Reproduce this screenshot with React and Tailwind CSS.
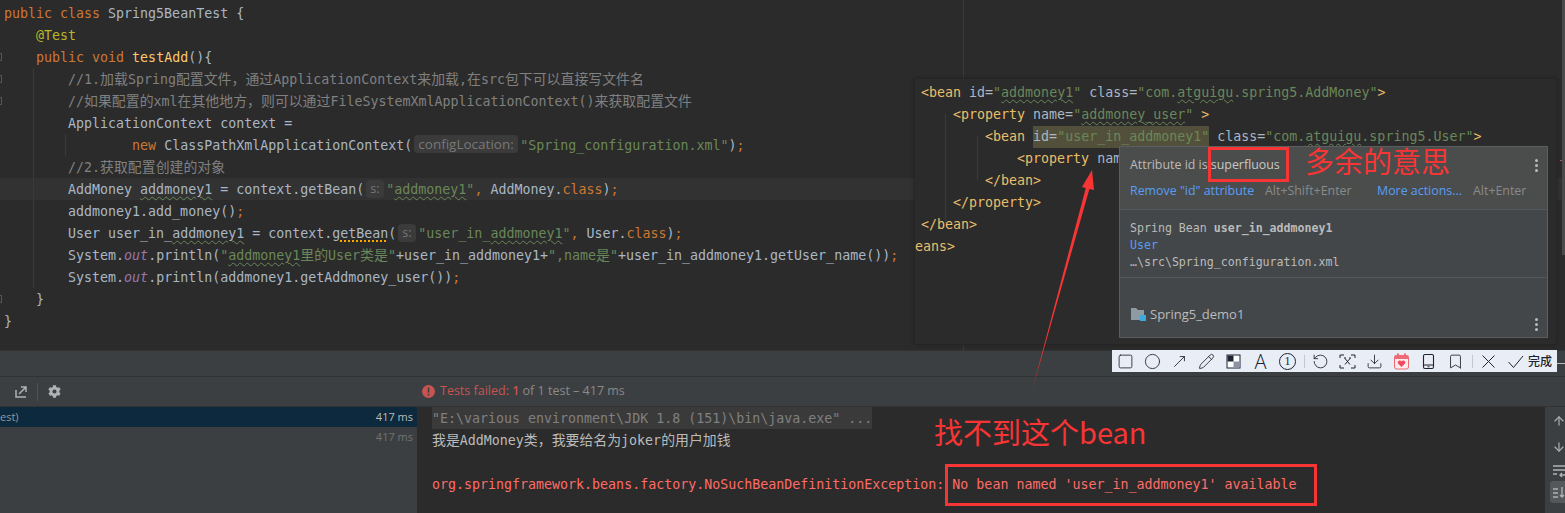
import { ArrowDown, ArrowUp, Bookmark, Circle, Download, MoveUpRight, Pencil, RotateCcw, Square } from 'lucide-react'
import { FaCog } from 'react-icons/fa'

const Kw = ({ children }) => <span className="text-[#cc7832]">{children}</span>
const Str = ({ children }) => <span className="text-[#6a8759]">{children}</span>
const Cm = ({ children }) => <span className="text-[#808080]">{children}</span>
const Zh = ({ children }) => <span className="text-[13.9px] leading-none">{children}</span>
const Out = () => <span className="italic text-[#9876aa]">out</span>
const Wavy = ({ children }) => (
  <span className="underline decoration-wavy decoration-[#6a8759] decoration-1 underline-offset-2">{children}</span>
)
const Hint = ({ children, wide }) => (
  <span className={`mx-[2px] inline-block h-[18px] rounded-[4px] bg-[#3b3b3b] px-[4px] align-[1px] font-['Open_Sans',sans-serif] leading-[18px] text-[#787878] ${wide ? 'w-[104px] text-[13.5px]' : 'w-[18px] text-[12.5px]'}`}>
    {children}
  </span>
)

function Line({ children, active }) {
  return (
    <div className={`h-[22px] whitespace-pre pl-[4px] leading-[24px] ${active ? 'bg-[#323232]' : ''}`}>{children}</div>
  )
}

function Editor() {
  return (
    <div className="relative h-[351px] shrink-0 border-b border-[#323232] pt-[2px]">
      <div className="absolute left-[963px] top-0 h-full w-px bg-[#3a3a3a]" />
      <div className="absolute left-[33px] top-[68px] h-[220px] w-px bg-[#3a3a3a]" />
      <div className="absolute left-[65px] top-[134px] h-[22px] w-px bg-[#3a3a3a]" />
      {[53, 75, 97, 295].map((y) => (
        <div key={y} className="absolute left-0 h-[8px] w-[2px] border border-l-0 border-[#555]" style={{ top: y }} />
      ))}
      <Line><Kw>public class </Kw>Spring5BeanTest {'{'}</Line>
      <Line>{'    '}<span className="text-[#bbb529]">@Test</span></Line>
      <Line>{'    '}<Kw>public void </Kw><span className="text-[#ffc66d]">testAdd</span>(){'{'}</Line>
      <Line>{'        '}<Cm>//1.<Zh>加载</Zh>Spring<Zh>配置文件，通过</Zh>ApplicationContext<Zh>来加载</Zh>,<Zh>在</Zh>src<Zh>包下可以直接写文件名</Zh></Cm></Line>
      <Line>{'        '}<Cm>//<Zh>如果配置的</Zh>xml<Zh>在其他地方，则可以通过</Zh>FileSystemXmlApplicationContext()<Zh>来获取配置文件</Zh></Cm></Line>
      <Line>{'        '}ApplicationContext context =</Line>
      <Line>{'                '}<Kw>new </Kw>ClassPathXmlApplicationContext(<Hint wide>configLocation:</Hint><Str>"Spring_configuration.xml"</Str>)<Kw>;</Kw></Line>
      <Line>{'        '}<Cm>//2.<Zh>获取配置创建的对象</Zh></Cm></Line>
      <Line active>{'        '}AddMoney <Wavy>addmoney1</Wavy> = context.getBean(<Hint>s:</Hint><Str>"<Wavy>addmoney1</Wavy>"</Str><Kw>, </Kw>AddMoney.<Kw>class</Kw>)<Kw>;</Kw></Line>
      <Line>{'        '}addmoney1.add_money()<Kw>;</Kw></Line>
      <Line>{'        '}User user_in_<Wavy>addmoney1</Wavy> = context.<span className="underline decoration-dotted decoration-[#ffa500] decoration-2 underline-offset-2">getBean</span>(<Hint>s:</Hint><Str>"user_in_<Wavy>addmoney1</Wavy>"</Str><Kw>, </Kw>User.<Kw>class</Kw>)<Kw>;</Kw></Line>
      <Line>{'        '}System.<Out />.println(<Str>"<Wavy>addmoney1</Wavy><Zh>里的</Zh>User<Zh>类是</Zh>"</Str>+user_in_addmoney1+<Str>",name<Zh>是</Zh>"</Str>+user_in_addmoney1.getUser_name())<Kw>;</Kw></Line>
      <Line>{'        '}System.<Out />.println(addmoney1.getAddmoney_user())<Kw>;</Kw></Line>
      <Line>{'    '}{'}'}</Line>
      <Line>{'}'}</Line>
    </div>
  )
}

const Tag = ({ children }) => <span className="text-[#e8bf6a]">{children}</span>

function Dots({ className }) {
  return (
    <div className={`flex flex-col gap-[2px] ${className}`}>
      <div className="size-[3px] rounded-full bg-[#bbbbbb]" />
      <div className="size-[3px] rounded-full bg-[#bbbbbb]" />
      <div className="size-[3px] rounded-full bg-[#bbbbbb]" />
    </div>
  )
}

function Tooltip() {
  return (
    <div className="absolute left-[204px] top-[67px] flex h-[192px] w-[429px] flex-col border border-[#5b5d5f] bg-[#43474a] font-['Open_Sans',sans-serif] text-[12.4px]">
      <div className="relative h-[63px] shrink-0 border-b border-[#55585a] bg-[#4b4d4d] px-[10px]">
        <div className="pt-[9px] leading-[18px] text-[#bbbbbb]">Attribute id is <span className="text-[#c8c8c8]">superfluous</span></div>
        <div className="mt-[8px] flex leading-[18px]">
          <span className="w-[135px] text-[#589df6]">Remove "id" attribute</span>
          <span className="w-[112px] text-[#8a8a8a]">Alt+Shift+Enter</span>
          <span className="w-[96px] text-[#589df6]">More actions...</span>
          <span className="text-[#8a8a8a]">Alt+Enter</span>
        </div>
        <Dots className="absolute right-[9px] top-[12px]" />
      </div>
      <div className="h-[68px] shrink-0 border-b border-[#55585a] px-[10px] pt-[10px] font-['DejaVu_Sans_Mono',monospace] text-[11.6px] leading-[17px] text-[#bbbbbb]">
        <div>Spring Bean <span className="font-semibold">user_in_addmoney1</span></div>
        <div className="text-[#589df6]">User</div>
        <div>…\src\Spring_configuration.xml</div>
      </div>
      <div className="relative flex-1 px-[11px] pt-[27px]">
        <div className="flex items-center gap-[4px] text-[13px] leading-[18px] text-[#bbbbbb]">
          <svg width="15" height="14" viewBox="0 0 15 14">
            <path d="M0 1h5l2 2h6v10H0z" fill="#8f9ba3" />
            <rect x="9" y="8" width="6" height="6" fill="#3fa9dc" />
          </svg>
          Spring5_demo1
        </div>
        <Dots className="absolute bottom-[6px] right-[9px]" />
      </div>
    </div>
  )
}

function XmlPopup() {
  const row = 'h-[22px] whitespace-pre leading-[22px]'
  return (
    <div className="absolute left-[915px] top-[79px] h-[265px] w-[641px] bg-[#2b2b2b] pl-[6px] pt-[3px] shadow-[0_0_3px_1px_#222]">
      <div className="absolute left-[30px] top-[35px] h-[110px] w-px bg-[#3a3a3a]" />
      <div className="absolute left-[62px] top-[57px] h-[44px] w-px bg-[#3a3a3a]" />
      <div className={row}><Tag>&lt;bean </Tag>id=<Str>"<Wavy>addmoney1</Wavy>"</Str> class=<Str>"com.<Wavy>atguigu</Wavy>.spring5.AddMoney"</Str><Tag>&gt;</Tag></div>
      <div className={row}>{'    '}<Tag>&lt;property </Tag>name=<Str>"<Wavy>addmoney_user</Wavy>"</Str> <Tag>&gt;</Tag></div>
      <div className={row}>{'        '}<Tag>&lt;bean </Tag><span className="inline-block h-[22px] bg-[#52503a]">id=<Str>"user_in_addmoney1"</Str></span> class=<Str>"com.<Wavy>atguigu</Wavy>.spring5.User"</Str><Tag>&gt;</Tag></div>
      <div className={row}>{'            '}<Tag>&lt;property </Tag>name</div>
      <div className={row}>{'        '}<Tag>&lt;/bean&gt;</Tag></div>
      <div className={row}>{'    '}<Tag>&lt;/property&gt;</Tag></div>
      <div className={row}><Tag>&lt;/bean&gt;</Tag></div>
      <div className={`-ml-[6px] ${row}`}><Tag>eans&gt;</Tag></div>
      <Tooltip />
    </div>
  )
}

function ShotToolbar() {
  const icon = { size: 17, strokeWidth: 1.2, className: 'shrink-0' }
  return (
    <div className="absolute left-[1112px] top-[350px] flex h-[22px] w-[445px] items-center gap-[10px] bg-[#e9edf5] pl-[5px] text-[#1c2433]">
      <Square {...icon} />
      <Circle {...icon} />
      <MoveUpRight {...icon} />
      <Pencil {...icon} />
      <svg width="17" height="17" viewBox="0 0 17 17" className="shrink-0">
        <rect x="2" y="2" width="13" height="13" fill="#fff" stroke="#1c2433" />
        <rect x="2.5" y="2.5" width="6" height="6" fill="#1c2433" />
        <rect x="8.5" y="8.5" width="6" height="6" fill="#8b93a3" />
      </svg>
      <span className="w-[17px] shrink-0 text-center font-['Open_Sans',sans-serif] text-[20px] font-light leading-[17px]">A</span>
      <span className="flex size-[17px] shrink-0 items-center justify-center rounded-full border border-[#1c2433] font-['Liberation_Serif',serif] text-[12px] leading-none">1</span>
      <div className="-mx-[2.5px] h-[13px] w-px shrink-0 bg-[#c3c7cf]" />
      <RotateCcw {...icon} />
      <svg width="17" height="17" viewBox="0 0 17 17" fill="none" stroke="#1c2433" className="shrink-0">
        <path d="M1 5V2h4M12 2h4v3M16 12v3h-4M5 15H1v-3M6 5.5l5 6M11 5.5l-5 6M5 5h2M10 5h2" />
      </svg>
      <Download {...icon} />
      <svg width="17" height="17" viewBox="0 0 17 17" className="shrink-0">
        <rect x="1.5" y="2.5" width="14" height="13.5" rx="2" fill="#fdeaea" stroke="#ee6a74" />
        <rect x="1.5" y="2.5" width="14" height="3.5" fill="#ee6a74" />
        <rect x="4" y="0.5" width="2" height="3" fill="#ee6a74" />
        <rect x="11" y="0.5" width="2" height="3" fill="#ee6a74" />
        <path d="M8.5 14 5 10.5a2 2 0 0 1 3.5-2 2 2 0 0 1 3.5 2z" fill="#ee4a5c" />
      </svg>
      <svg width="17" height="17" viewBox="0 0 17 17" fill="none" stroke="#1c2433" strokeWidth="1.1" className="shrink-0">
        <rect x="3.5" y="1.5" width="10" height="14" rx="1.5" />
        <path d="M3.5 12h10M7.5 13.8h2" />
      </svg>
      <Bookmark {...icon} />
      <div className="-mx-[2.5px] h-[13px] w-px shrink-0 bg-[#c3c7cf]" />
      <svg width="17" height="17" viewBox="0 0 17 17" fill="none" stroke="#1c2433" strokeWidth="1" className="shrink-0">
        <path d="M2.5 2.5l12 12M14.5 2.5l-12 12" />
      </svg>
      <div className="flex items-center gap-[4px]">
        <svg width="17" height="17" viewBox="0 0 17 17" fill="none" stroke="#1c2433" strokeWidth="1" className="shrink-0">
          <path d="M1.5 9l5 5.5L16 3" />
        </svg>
        <span className="font-['Noto_Sans_CJK_SC',sans-serif] text-[12px] font-medium leading-none">完成</span>
      </div>
    </div>
  )
}

function BottomPanel() {
  const row = 'h-[22px] leading-[24px]'
  return (
    <div className="flex min-h-0 flex-1 flex-col bg-[#3c3f41]">
      <div className="h-[26px] shrink-0 border-b border-[#323232]" />
      <div className="flex h-[30px] shrink-0 items-center border-b border-[#323232]">
        <div className="flex w-[417px] shrink-0 items-center pl-[15px]">
          <svg width="12" height="12" viewBox="0 0 12 12" fill="none" stroke="#afb1b3" strokeWidth="1.5" className="shrink-0">
            <path d="M1 4v7h10M6 1h5v5M11 1 4 8" />
          </svg>
          <div className="ml-[10px] h-[18px] w-px bg-[#4e5254]" />
          <FaCog size={13} className="ml-[10px] text-[#afb1b3]" />
        </div>
        <div className="flex items-center gap-[5px] pl-[5px] font-['Open_Sans',sans-serif] text-[12.5px] text-[#8a8a8a]">
          <svg width="13" height="13" viewBox="0 0 13 13" className="shrink-0">
            <circle cx="6.5" cy="6.5" r="6.5" fill="#c75450" />
            <rect x="5.7" y="2.5" width="1.6" height="5" fill="#3c3f41" />
            <rect x="5.7" y="8.8" width="1.6" height="1.7" fill="#3c3f41" />
          </svg>
          <span><span className="text-[#c75450]">Tests failed: <b className="font-semibold">1</b></span> of 1 test – 417 ms</span>
        </div>
      </div>
      <div className="flex min-h-0 flex-1">
        <div className="w-[417px] shrink-0 font-['Open_Sans',sans-serif] text-[11px]">
          <div className="flex h-[20px] items-center justify-between bg-[#0d293e] pr-[4px] text-[#8f9aa3]">
            <span>est)</span>
            <span className="text-[#bbbbbb]">417 ms</span>
          </div>
          <div className="flex h-[20px] items-center justify-end pr-[4px] text-[#6f7274]">417 ms</div>
        </div>
        <div className="flex-1 whitespace-pre bg-[#2b2b2b] pl-[15px] text-[#bbbbbb]">
          <div className={`${row} w-fit bg-[#3a3a3a] text-[#808080]`}>"E:\various environment\JDK 1.8 (151)\bin\java.exe" ...</div>
          <div className={row}><Zh>我是</Zh>AddMoney<Zh>类，我要给名为</Zh>joker<Zh>的用户加钱</Zh></div>
          <div className={row} />
          <div className={`${row} text-[#ff6b68]`}>org.springframework.beans.factory.NoSuchBeanDefinitionException: No bean named 'user_in_addmoney1' available</div>
        </div>
        <div className="flex w-[20px] shrink-0 flex-col items-center pl-[7px] pt-[6px] text-[#afb1b3]">
          <ArrowUp size={14} strokeWidth={2} className="my-[1px]" />
          <ArrowDown size={14} strokeWidth={2} className="mt-[11px]" />
          <svg width="14" height="14" viewBox="0 0 14 14" fill="none" stroke="currentColor" strokeWidth="1.4" className="mt-[10px] shrink-0">
            <path d="M1 2h12M1 6h11a2 2 0 0 1 0 5H8M10 9l-2 2 2 2M1 10h4" />
          </svg>
          <div className="mt-[3px] flex h-[22px] w-[17px] shrink-0 items-center justify-center rounded-l-[3px] bg-[#54585a]">
            <svg width="13" height="13" viewBox="0 0 13 13" fill="none" stroke="currentColor" strokeWidth="1.4">
              <path d="M1 3h5M1 7h5M1 11h5M10 1v10M8 9l2 2 2-2" />
            </svg>
          </div>
        </div>
      </div>
    </div>
  )
}

function Annotations() {
  return (
    <>
      <div className="absolute left-[1208px] top-[147px] h-[35px] w-[81px] border-[3px] border-[#f83535]" />
      <div className="absolute left-[1305px] top-[148px] font-['Noto_Sans_CJK_SC',sans-serif] text-[29px] leading-[24px] text-[#f83535]">多余的意思</div>
      <div className="absolute left-[934px] top-[411px] font-['Noto_Sans_CJK_SC',sans-serif] text-[29px] leading-[40px] text-[#f83535]">找不到这个bean</div>
      <div className="absolute left-[945px] top-[464px] h-[42px] w-[372px] border-[3px] border-[#f83535]" />
      <svg className="absolute left-0 top-0" width="1565" height="513">
        <polygon points="1032,391 1085.8,188 1082,187 1092,170 1094,190 1089.4,189" fill="#f83535" />
      </svg>
      <div className="absolute right-0 top-[363px] h-px w-[8px] bg-[#bbbbbb]" />
      <div className="absolute right-0 top-[160px] h-px w-[5px] bg-[#c75450]" />
      <div className="absolute right-0 top-0 h-[255px] w-[3px] bg-[#4a4a4a]" />
    </>
  )
}

export default function App() {
  return (
    <div className="relative flex h-[513px] w-[1565px] flex-col overflow-hidden bg-[#2b2b2b] font-['DejaVu_Sans_Mono','Noto_Sans_CJK_SC',monospace] text-[13.3px] text-[#a9b7c6]">
      <Editor />
      <BottomPanel />
      <XmlPopup />
      <ShotToolbar />
      <Annotations />
    </div>
  )
}
